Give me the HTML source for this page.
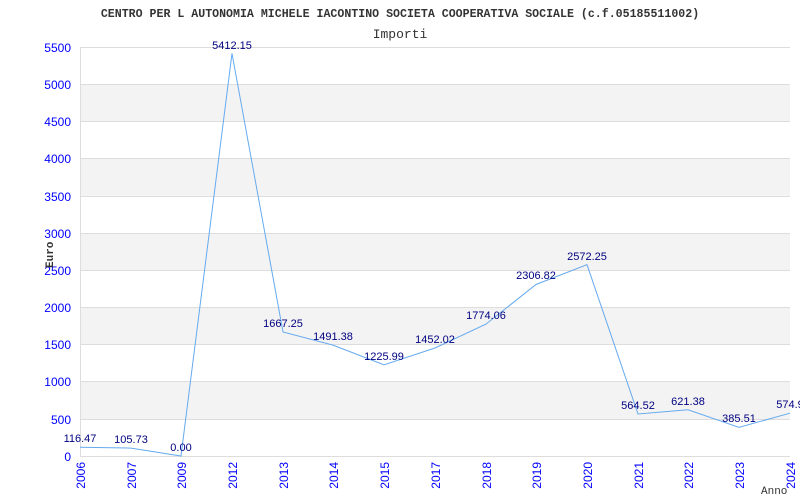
<!DOCTYPE html>
<html><head><style>body{margin:0;background:#fff}svg{display:block}</style></head><body>
<svg width="800" height="500" xmlns="http://www.w3.org/2000/svg">
<rect width="800" height="500" fill="#fff"/>
<text x="400" y="17" text-anchor="middle" font-family="Liberation Mono, monospace" font-weight="bold" font-size="11.6" fill="#333">CENTRO PER L AUTONOMIA MICHELE IACONTINO SOCIETA COOPERATIVA SOCIALE (c.f.05185511002)</text>
<text x="400" y="38" text-anchor="middle" font-family="Liberation Mono, monospace" font-size="13" fill="#333">Importi</text>
<g fill="#f3f3f3">
<rect x="80" y="84.2" width="710" height="37.2"/><rect x="80" y="158.6" width="710" height="37.2"/><rect x="80" y="233" width="710" height="37.2"/><rect x="80" y="307.4" width="710" height="37.2"/><rect x="80" y="381.8" width="710" height="37.2"/>
</g>
<g stroke="#ddd" stroke-width="1">
<line x1="80" x2="790" y1="47.5" y2="47.5"/><line x1="80" x2="790" y1="84.5" y2="84.5"/><line x1="80" x2="790" y1="121.5" y2="121.5"/><line x1="80" x2="790" y1="158.5" y2="158.5"/><line x1="80" x2="790" y1="196.5" y2="196.5"/><line x1="80" x2="790" y1="233.5" y2="233.5"/><line x1="80" x2="790" y1="270.5" y2="270.5"/><line x1="80" x2="790" y1="307.5" y2="307.5"/><line x1="80" x2="790" y1="344.5" y2="344.5"/><line x1="80" x2="790" y1="381.5" y2="381.5"/><line x1="80" x2="790" y1="419.5" y2="419.5"/><line x1="80" x2="790" y1="456.5" y2="456.5"/>
<line x1="80.5" x2="80.5" y1="47" y2="457"/>
</g>
<g font-family="Liberation Sans, sans-serif" font-size="12" fill="#0000ff" text-anchor="end">
<text x="71" y="52">5500</text><text x="71" y="89">5000</text><text x="71" y="126">4500</text><text x="71" y="163">4000</text><text x="71" y="201">3500</text><text x="71" y="238">3000</text><text x="71" y="275">2500</text><text x="71" y="312">2000</text><text x="71" y="349">1500</text><text x="71" y="386">1000</text><text x="71" y="424">500</text><text x="71" y="461">0</text>
</g>
<text transform="translate(53,268) rotate(-90)" font-family="Liberation Mono, monospace" font-weight="bold" font-size="11" fill="#333">Euro</text>
<text x="761" y="494" font-family="Liberation Mono, monospace" font-size="11" fill="#333">Anno</text>
<g font-family="Liberation Sans, sans-serif" font-size="12" fill="#0000ff" text-anchor="end">
<text transform="translate(85,462) rotate(-90)">2006</text><text transform="translate(136,462) rotate(-90)">2007</text><text transform="translate(186,462) rotate(-90)">2009</text><text transform="translate(237,462) rotate(-90)">2012</text><text transform="translate(288,462) rotate(-90)">2013</text><text transform="translate(338,462) rotate(-90)">2014</text><text transform="translate(389,462) rotate(-90)">2015</text><text transform="translate(440,462) rotate(-90)">2017</text><text transform="translate(491,462) rotate(-90)">2018</text><text transform="translate(541,462) rotate(-90)">2019</text><text transform="translate(592,462) rotate(-90)">2020</text><text transform="translate(643,462) rotate(-90)">2021</text><text transform="translate(693,462) rotate(-90)">2022</text><text transform="translate(744,462) rotate(-90)">2023</text><text transform="translate(795,462) rotate(-90)">2024</text>
</g>
<polyline fill="none" stroke="#66aaee" stroke-width="1" points="80,447.3 131,448.1 181,456 232,53.5 283,332 333,345.1 384,364.8 435,348 486,324.1 536,284.5 587,264.7 638,414 688,409.8 739,427.3 790,413.2"/>
<g font-family="Liberation Sans, sans-serif" font-size="11" fill="#000080" text-anchor="middle">
<text x="80" y="442">116.47</text><text x="131" y="443">105.73</text><text x="181" y="451">0.00</text><text x="232" y="49">5412.15</text><text x="283" y="327">1667.25</text><text x="333" y="340">1491.38</text><text x="384" y="360">1225.99</text><text x="435" y="343">1452.02</text><text x="486" y="319">1774.06</text><text x="536" y="279">2306.82</text><text x="587" y="260">2572.25</text><text x="638" y="409">564.52</text><text x="688" y="405">621.38</text><text x="739" y="422">385.51</text><text x="790" y="408">574.9</text>
</g>
</svg>
</body></html>
